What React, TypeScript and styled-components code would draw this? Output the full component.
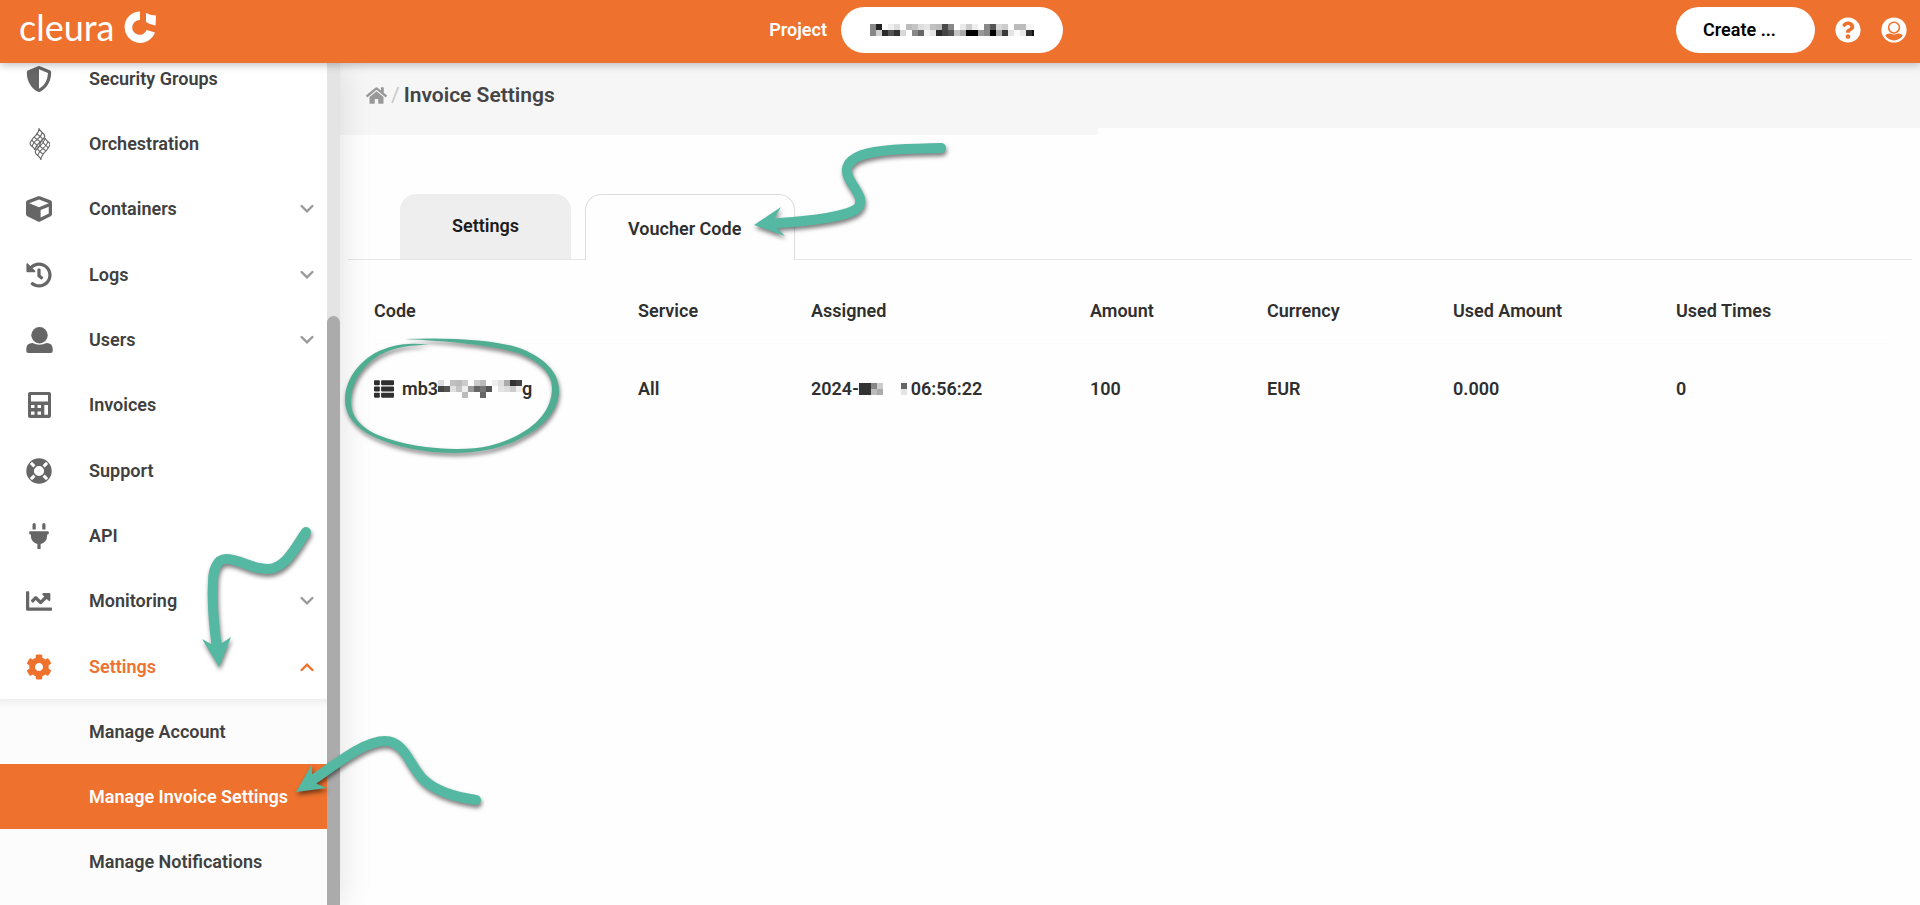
import React from 'react';
import styled, { createGlobalStyle, css } from 'styled-components';
import {
  FaChartLine,
  FaCog,
  FaCube,
  FaHistory,
  FaHome,
  FaPlug,
  FaQuestionCircle,
  FaShieldAlt,
  FaThList,
} from 'react-icons/fa';

const color = {
  brand: '#ee712e',
  text: '#404040',
  strong: '#2f2f2f',
  icon: '#666666',
  teal: '#55b8a3',
  circle: '#4fae92',
};

const GlobalStyle = createGlobalStyle`
  *, *::before, *::after { box-sizing: border-box; }
  body {
    margin: 0;
    background: #fefefe;
    color: ${color.strong};
    font-family: Roboto, "Liberation Sans", sans-serif;
    font-size: 18px;
    font-weight: 600;
    line-height: 24px;
  }
  a { color: inherit; text-decoration: none; }
  button { font: inherit; color: inherit; border: 0; background: none; padding: 0; cursor: pointer; }
`;

const Page = styled.div`
  position: relative;
  display: flex;
  flex-direction: column;
  height: 100vh;
  overflow: hidden;
`;

/* Header */

const Header = styled.header`
  position: relative;
  z-index: 3;
  display: grid;
  grid-template-columns: 8fr auto 9fr;
  flex: none;
  height: 63px;
  padding: 7px 13px 10px 19px;
  background: ${color.brand};
  box-shadow: 0 2px 8px rgba(0, 0, 0, 0.25);
  color: #fff;
`;

const Brand = styled.a`
  display: flex;
  align-items: center;
  gap: 10px;
  height: 40px;
  font-family: Lato, sans-serif;
  font-size: 36px;
  font-weight: 400;
  line-height: 40px;
`;

const ProjectPicker = styled.div`
  display: flex;
  align-items: center;
  gap: 14px;
`;

const Pill = styled.button<{ $width: number }>`
  display: flex;
  align-items: center;
  width: ${(p) => p.$width}px;
  height: 46px;
  padding: 0 27px;
  border-radius: 23px;
  background: #fff;
  color: #000;
`;

const ProjectPill = styled(Pill)`
  padding: 0 29px;
`;

const HeaderActions = styled.div`
  display: flex;
  align-items: center;
  justify-content: flex-end;
  gap: 20px;
`;

const IconButton = styled.button`
  display: flex;
  color: #fff;
  & svg { width: 26px; height: 26px; }
`;

/* Sidebar */

const Body = styled.div`
  display: flex;
  flex: 1;
  min-height: 0;
`;

const Sidebar = styled.aside`
  position: relative;
  z-index: 2;
  display: flex;
  flex: none;
  width: 340px;
  background: #fff;
  box-shadow: 0 0 32px rgba(0, 0, 0, 0.12);
`;

const Nav = styled.nav`
  display: flex;
  flex: 1;
  flex-direction: column;
  gap: 1px;
  margin-top: -17px;
`;

const NavGroup = styled.ul`
  margin: 0;
  padding: 0;
  list-style: none;
`;

const rowStyle = css<{ $active?: boolean }>`
  display: grid;
  grid-template-columns: 26px 1fr 14px;
  column-gap: 37px;
  align-items: center;
  width: 100%;
  height: 65px;
  padding: 0 13px 0 26px;
  color: ${(p) => (p.$active ? color.brand : color.text)};
  text-align: left;
  & > svg:first-child {
    justify-self: center;
    color: ${(p) => (p.$active ? color.brand : color.icon)};
  }
`;

const NavLink = styled.a<{ $active?: boolean }>`${rowStyle}`;
const NavToggle = styled.button<{ $active?: boolean }>`${rowStyle}`;

const ChevronSvg = styled.svg<{ $open?: boolean }>`
  width: 14px;
  height: 10px;
  color: ${(p) => (p.$open ? color.brand : '#999')};
  transform: ${(p) => (p.$open ? 'rotate(180deg)' : 'none')};
`;

const SubMenu = styled.ul`
  margin: 0;
  padding: 0 0 65px;
  list-style: none;
  background: #fcfcfc;
  box-shadow: inset 0 10px 10px -8px rgba(0, 0, 0, 0.08);
`;

const SubLink = styled.a<{ $current?: boolean }>`
  display: flex;
  align-items: center;
  height: 65px;
  padding-left: 89px;
  white-space: nowrap;
  background: ${(p) => (p.$current ? color.brand : 'transparent')};
  color: ${(p) => (p.$current ? '#fff' : color.text)};
`;

const ScrollTrack = styled.div`
  display: flex;
  flex: none;
  width: 13px;
  padding-top: 253px;
  background: #e4e4e4;
`;

const ScrollThumb = styled.div`
  flex: 1;
  border-radius: 7px 7px 0 0;
  background: #ababab;
`;

/* Content */

const Main = styled.main`
  flex: 1;
  min-width: 0;
`;

const TitleBar = styled.div`
  height: 65px;
  background: #f6f6f6;
`;

const Crumbs = styled.nav`
  display: flex;
  align-items: center;
  gap: 4px;
  width: 48%;
  height: 72px;
  padding: 0 26px 8px;
  background: #f6f6f6;
  color: #c8c8c8;
  font-size: 21px;
  font-weight: 400;
  & a { display: flex; color: #999; }
`;

const Title = styled.h1`
  margin: 0;
  color: #444;
  font-size: 21px;
  font-weight: 600;
  line-height: 24px;
`;

const Tabs = styled.div`
  display: flex;
  gap: 14px;
  margin: 66px 8px 0;
  padding-left: 52px;
  border-bottom: 1px solid #e6e6e6;
`;

const Tab = styled.button<{ $selected?: boolean }>`
  height: ${(p) => (p.$selected ? 66 : 65)}px;
  padding: ${(p) => (p.$selected ? '2px 53px 0 42px' : '0 51px 2px')};
  border: 1px solid ${(p) => (p.$selected ? '#ddd' : '#eee')};
  border-bottom: 0;
  border-radius: 16px 16px 0 0;
  margin-bottom: ${(p) => (p.$selected ? '-1px' : '0')};
  background: ${(p) => (p.$selected ? '#fefefe' : '#eee')};
  color: ${(p) => (p.$selected ? color.strong : '#1c1c1c')};
`;

const TablePanel = styled.section`
  padding: 19px 34px 0;
`;

const Table = styled.table`
  width: 100%;
  border-collapse: collapse;
  table-layout: fixed;
  text-align: left;
`;

const HeadCell = styled.th<{ $width?: string }>`
  width: ${(p) => p.$width ?? 'auto'};
  height: 64px;
  padding: 0;
  border-bottom: 1px solid #fafafa;
  font-weight: 600;
`;

const Cell = styled.td`
  height: 92px;
  padding: 0;
`;

const Inline = styled.span`
  display: flex;
  align-items: center;
  & > svg { flex: none; }
`;

const ListIcon = styled(FaThList)`
  width: 20px;
  height: 20px;
  margin-right: 8px;
`;

const Overlay = styled.svg`
  position: absolute;
  top: 0;
  left: 0;
  z-index: 4;
  pointer-events: none;
  filter: drop-shadow(1px 3px 2px rgba(0, 0, 0, 0.5));
`;

/* Drawings */

const Chevron = ({ open }: { open?: boolean }) => (
  <ChevronSvg $open={open} viewBox="0 0 14 10" fill="none" stroke="currentColor" strokeWidth="2.4" strokeLinecap="round" aria-hidden>
    <path d="M1.6 2 L7 7.4 L12.4 2" />
  </ChevronSvg>
);

const BrandMark = () => (
  <svg width="32" height="32" viewBox="125 11 32 32" fill="#fff" aria-hidden>
    <path d="M141 11.5 A15.7 15.7 0 1 0 156 32.6 L147.6 29.9 A7.4 7.4 0 1 1 141 20 Z" />
    <path d="M147 13 Q152 15.6 157 15.6 L156.6 25.6 Q151 24.8 147 22 Z" />
  </svg>
);

const AccountIcon = () => (
  <svg viewBox="0 0 26 26" aria-hidden>
    <circle cx="13" cy="13" r="12.6" fill="#fff" />
    <circle cx="13" cy="10.6" r="5.4" fill="#fff" stroke={color.brand} strokeWidth="1.6" />
    <path d="M4.2 18.6 C5.6 16.8 7.6 16.2 9.2 16.6 Q13 18.6 16.8 16.6 C18.4 16.2 20.4 16.8 21.8 18.6 C19.9 21.8 16.6 23.4 13 23.4 C9.4 23.4 6.1 21.8 4.2 18.6Z" fill={color.brand} />
  </svg>
);

const weaveHalf =
  'M10 0 C11 5 17 5 15.5 9 C14 12 11.5 13 11 16 M7.5 5 C9 8 14.500 9 13 12 M5 8.5 C6 12 12 12 11 15 M3 12 C4 15 9 16 8 19 M1 16 C2 19 6 19 5.5 22 M10 0 C11 7 2 9 1 16 M13 4 C13.500 10 4 12 3 19 M16 8 C14.500 13 7 15 6 22';

const WeaveIcon = () => (
  <svg width="22" height="34" viewBox="-1 -1 22 34" fill="none" stroke="currentColor" strokeWidth="1.1" aria-hidden>
    <path d={weaveHalf} />
    <path d={weaveHalf} transform="rotate(180 11 16)" />
  </svg>
);

const UserIcon = () => (
  <svg width="27" height="26" viewBox="0 0 27 26" fill="currentColor" aria-hidden>
    <circle cx="13.5" cy="8.2" r="8.2" />
    <path d="M6.5 16 Q13.5 19.6 20.5 16 Q26.7 16.2 26.7 22 V24 Q26.7 26 24.7 26 H2.3 Q0.3 26 0.3 24 V22 Q0.3 16.2 6.5 16Z" />
  </svg>
);

const CalculatorIcon = () => (
  <svg width="23" height="26" viewBox="0 0 23 26" fill="currentColor" fillRule="evenodd" aria-hidden>
    <path d="M2 0 H21 Q23 0 23 2 V24 Q23 26 21 26 H2 Q0 26 0 24 V2 Q0 0 2 0Z M3 3 V9.5 H20 V3Z M3 13 V16 H6.5 V13Z M9.5 13 V16 H13 V13Z M3 19.5 V22.7 H6.5 V19.5Z M9.5 19.5 V22.7 H13 V19.5Z M16.3 13 V22.7 H20 V13Z" />
  </svg>
);

const BuoyIcon = () => (
  <svg width="26" height="26" viewBox="0 0 26 26" aria-hidden>
    <circle cx="13" cy="13" r="8.9" fill="none" stroke="currentColor" strokeWidth="7.6" />
    <path d="M4.9 4.9 L8.4 8.4 M21.1 4.9 L17.6 8.4 M4.9 21.1 L8.4 17.6 M21.1 21.1 L17.6 17.6" stroke="#fff" strokeWidth="3" />
  </svg>
);

type Tile = [x: number, y: number, fill: string];

const TILE = 6;

const Mosaic = ({ width, height, tiles }: { width: number; height: number; tiles: Tile[] }) => (
  <svg width={width} height={height} shapeRendering="crispEdges" aria-hidden>
    {tiles.map(([x, y, fill]) => (
      <rect key={`${x}-${y}`} x={x * TILE} y={y * TILE} width={TILE} height={TILE} fill={fill} />
    ))}
  </svg>
);

const toTiles = (rows: string[]): Tile[] =>
  rows.flatMap((row, y) =>
    row.split(' ').flatMap((shade, x): Tile[] => (shade === '--' ? [] : [[x, y, `#${shade}${shade}${shade}`]])),
  );

const projectTiles = toTiles([
  '88 22 -- ee dd -- bb c4 dd e4 c0 bb 4a 88 -- ea cc ee -- 88 55 d8 cc -- bb bb f5 fa',
  '88 d0 2a 55 33 d8 -- 88 66 f4 e4 2a 44 55 c4 aa 00 00 99 88 00 aa 3a e4 fa e8 33 11',
]);

const codeTiles = toTiles([
  'dd -- c0 bb cc -- cc bb -- ee dd aa 33 44',
  '44 55 e0 c4 ee 99 66 77 55 -- e4 dd cc ee',
  '-- -- -- -- bb -- -- 66',
]);

const dateTiles = toTiles(['33 33 88 cc -- -- -- 66', '33 33 bb aa -- -- -- e4']);

const Annotations = () => (
  <Overlay width="1000" height="905" viewBox="0 0 1000 905" aria-hidden>
    <g fill="none" stroke={color.teal} strokeWidth="10" strokeLinecap="round">
      <path d="M941 148 C905 149 880 149 862 155 C843 162 845 172 851 182 C858 193 866 203 855 210 C840 218 810 221 779 223" />
      <path d="M306 532 C296 546 286 569 267 569 C251 569 240 559 226 559 C216 559 213 572 213 582 C212 600 213 620 217 648" />
      <path d="M476 800 C455 797 436 791 424 780 C410 767 405 741 385 741 C365 741 340 761 314 779" />
    </g>
    <g fill={color.teal}>
      <path d="M754 225 L781 207 L775 218 L777 228 L785 236 Z" />
      <path d="M219 667 L202 639 L211 644 L222 643 L231 637 Z" />
      <path d="M296 792 L312 764 L312 774 L317 784 L327 788 Z" />
    </g>
    <path
      fill={color.circle}
      d="M404 339 C450 337 490 340 513 346 C540 354 559 370 559 390 C559 410 543 427 525 436 C505 448 480 453 455 453 C425 453 395 447 374 437 C355 428 345 415 345 400 C345 380 358 363 375 353 C392 344 410 342 429 345 C410 345 395 347 380 355 C363 365 351 382 351 402 C351 417 362 428 378 435 C400 444 430 449 457 449 C485 449 505 443 523 432 C542 421 552 405 552 388 C552 372 538 361 518 353 C495 346 450 341 404 339Z"
    />
  </Overlay>
);

/* Data */

type Item = { label: string; icon: React.ReactNode; expandable?: boolean; open?: boolean };

const groups: Item[][] = [
  [
    { label: 'Security Groups', icon: <FaShieldAlt size={26} /> },
    { label: 'Orchestration', icon: <WeaveIcon /> },
    { label: 'Containers', icon: <FaCube size={26} />, expandable: true },
  ],
  [
    { label: 'Logs', icon: <FaHistory size={26} />, expandable: true },
    { label: 'Users', icon: <UserIcon />, expandable: true },
    { label: 'Invoices', icon: <CalculatorIcon /> },
  ],
  [
    { label: 'Support', icon: <BuoyIcon /> },
    { label: 'API', icon: <FaPlug size={26} /> },
    { label: 'Monitoring', icon: <FaChartLine size={26} />, expandable: true },
  ],
  [
    { label: 'Settings', icon: <FaCog size={26} />, expandable: true, open: true },
  ],
];

const subItems = ['Manage Account', 'Manage Invoice Settings', 'Manage Notifications'];

const columns: { label: string; width?: string }[] = [
  { label: 'Code', width: '264px' },
  { label: 'Service', width: '173px' },
  { label: 'Assigned', width: '279px' },
  { label: 'Amount', width: '177px' },
  { label: 'Currency', width: '186px' },
  { label: 'Used Amount', width: '223px' },
  { label: 'Used Times' },
];

export default function App() {
  return (
    <Page>
      <GlobalStyle />
      <Header>
        <Brand href="#">
          cleura
          <BrandMark />
        </Brand>
        <ProjectPicker>
          <span id="project-label">Project</span>
          <ProjectPill $width={222} aria-labelledby="project-label">
            <Mosaic width={168} height={12} tiles={projectTiles} />
          </ProjectPill>
        </ProjectPicker>
        <HeaderActions>
          <Pill $width={139}>Create ...</Pill>
          <IconButton aria-label="Help"><FaQuestionCircle /></IconButton>
          <IconButton aria-label="Account"><AccountIcon /></IconButton>
        </HeaderActions>
      </Header>
      <Body>
        <Sidebar>
          <Nav>
            {groups.map((items) => (
              <NavGroup key={items[0].label}>
                {items.map(({ label, icon, expandable, open }) => (
                  <li key={label}>
                    {expandable ? (
                      <NavToggle $active={open} aria-expanded={!!open}>
                        {icon}
                        {label}
                        <Chevron open={open} />
                      </NavToggle>
                    ) : (
                      <NavLink href="#">
                        {icon}
                        {label}
                      </NavLink>
                    )}
                    {open && (
                      <SubMenu>
                        {subItems.map((name) => (
                          <li key={name}>
                            <SubLink href="#" $current={name === 'Manage Invoice Settings'}>{name}</SubLink>
                          </li>
                        ))}
                      </SubMenu>
                    )}
                  </li>
                ))}
              </NavGroup>
            ))}
          </Nav>
          <ScrollTrack>
            <ScrollThumb />
          </ScrollTrack>
        </Sidebar>
        <Main>
          <TitleBar>
            <Crumbs aria-label="Breadcrumb">
              <a href="#" aria-label="Home"><FaHome size={21} /></a>
              <span>/</span>
              <Title>Invoice Settings</Title>
            </Crumbs>
          </TitleBar>
          <Tabs role="tablist">
            <Tab role="tab" aria-selected={false}>Settings</Tab>
            <Tab role="tab" aria-selected $selected>Voucher Code</Tab>
          </Tabs>
          <TablePanel>
            <Table>
              <thead>
                <tr>
                  {columns.map(({ label, width }) => (
                    <HeadCell key={label} scope="col" $width={width}>{label}</HeadCell>
                  ))}
                </tr>
              </thead>
              <tbody>
                <tr>
                  <Cell>
                    <Inline>
                      <ListIcon />
                      mb3
                      <Mosaic width={84} height={18} tiles={codeTiles} />
                      g
                    </Inline>
                  </Cell>
                  <Cell>All</Cell>
                  <Cell>
                    <Inline>
                      2024-
                      <Mosaic width={52} height={12} tiles={dateTiles} />
                      06:56:22
                    </Inline>
                  </Cell>
                  <Cell>100</Cell>
                  <Cell>EUR</Cell>
                  <Cell>0.000</Cell>
                  <Cell>0</Cell>
                </tr>
              </tbody>
            </Table>
          </TablePanel>
        </Main>
      </Body>
      <Annotations />
    </Page>
  );
}
